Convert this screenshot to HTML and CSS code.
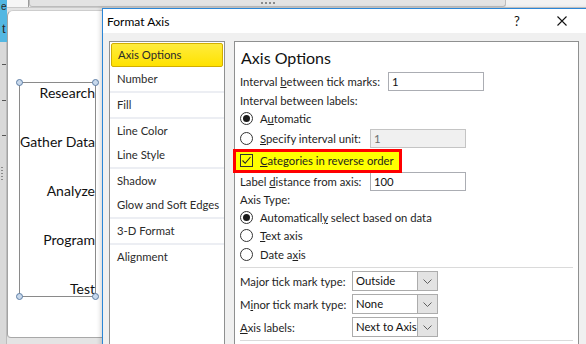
FILE: index.html
```html
<!DOCTYPE html>
<html>
<head>
<meta charset="utf-8">
<link rel="stylesheet" href="styles.css">
</head>
<body>
<div class="app">
  <div class="ruler">
    <div class="ruler-blue"><span class="rg1">e</span><span class="rg2">t</span></div>
    <div class="ruler-grey">
      <div class="tick t1"></div>
      <div class="tick t2"></div>
      <div class="tick t3"></div>
      <div class="grip-v"></div>
    </div>
  </div>
  <div class="main">
    <div class="topstrip">
      <div class="strip-left"></div>
      <div class="strip-thumb"><span class="grip-h"></span></div>
      <div class="strip-rest"></div>
    </div>
    <div class="chart">
      <div class="axisbox">
        <div class="lab">Research</div>
        <div class="lab">Gather Data</div>
        <div class="lab">Analyze</div>
        <div class="lab">Program</div>
        <div class="lab">Test</div>
        <span class="hd tl"></span><span class="hd tr"></span><span class="hd bl"></span><span class="hd br"></span>
      </div>
    </div>
  </div>
</div>

<div class="dialog">
  <div class="titlebar">
    <span class="title">Format Axis</span>
    <span class="help">?</span>
    <svg class="close" width="10" height="10" viewBox="0 0 10 10"><path d="M0.5 0.5 L9.5 9.5 M9.5 0.5 L0.5 9.5" stroke="#111" stroke-width="1.1" fill="none"/></svg>
  </div>
  <div class="dbody">
    <div class="nav">
      <div class="item sel">Axis Options</div>
      <div class="item">Number</div>
      <div class="sep"></div>
      <div class="item">Fill</div>
      <div class="sep"></div>
      <div class="item">Line Color</div>
      <div class="item">Line Style</div>
      <div class="sep"></div>
      <div class="item">Shadow</div>
      <div class="item">Glow and Soft Edges</div>
      <div class="sep"></div>
      <div class="item">3-D Format</div>
      <div class="sep"></div>
      <div class="item">Alignment</div>
    </div>
    <div class="panel">
      <div class="heading">Axis Options</div>
      <div class="row h22">
        <span class="lbl w148"><span>Interval <u>b</u>etween tick marks:</span></span>
        <span class="inp">1</span>
      </div>
      <div class="row h17"><span>Interval between labels:</span></div>
      <div class="row h18"><span class="radio on"></span><span>A<u>u</u>tomatic</span></div>
      <div class="row h22">
        <span class="lbl w130"><span class="radio"></span><span><u>S</u>pecify interval unit:</span></span>
        <span class="inp dis">1</span>
      </div>
      <div class="row h22 hlrow">
        <span class="hl"></span>
        <span class="check"><svg width="11" height="11" viewBox="0 0 11 11"><path d="M1.5 5.5 L4.2 8.3 L9.5 2" stroke="#222" stroke-width="1.1" fill="none"/></svg></span>
        <span class="fg"><u>C</u>ategories in reverse order</span>
      </div>
      <div class="row h20">
        <span class="lbl w130"><span>Label <u>d</u>istance from axis:</span></span>
        <span class="inp">100</span>
      </div>
      <div class="row h17"><span>Axis Type:</span></div>
      <div class="row h18"><span class="radio on"></span><span>Automaticall<u>y</u> select based on data</span></div>
      <div class="row h19"><span class="radio"></span><span><u>T</u>ext axis</span></div>
      <div class="row h19"><span class="radio"></span><span>Date a<u>x</u>is</span></div>
      <div class="hr hr1"></div>
      <div class="row h22">
        <span class="lbl w112"><span>Ma<u>j</u>or tick mark type:</span></span>
        <span class="dd"><span class="ddv">Outside</span><span class="ddb"><svg width="9" height="5" viewBox="0 0 9 5"><path d="M0.5 0.5 L4.5 4.5 L8.5 0.5" stroke="#606060" fill="none"/></svg></span></span>
      </div>
      <div class="row h24">
        <span class="lbl w112"><span>M<u>i</u>nor tick mark type:</span></span>
        <span class="dd"><span class="ddv">None</span><span class="ddb"><svg width="9" height="5" viewBox="0 0 9 5"><path d="M0.5 0.5 L4.5 4.5 L8.5 0.5" stroke="#606060" fill="none"/></svg></span></span>
      </div>
      <div class="row h22">
        <span class="lbl w112"><span><u>A</u>xis labels:</span></span>
        <span class="dd"><span class="ddv">Next to Axis</span><span class="ddb"><svg width="9" height="5" viewBox="0 0 9 5"><path d="M0.5 0.5 L4.5 4.5 L8.5 0.5" stroke="#606060" fill="none"/></svg></span></span>
      </div>
      <div class="hr hr2"></div>
    </div>
  </div>
</div>
</body>
</html>
```
FILE: styles.css
```css
* { box-sizing: border-box; }
html, body { margin: 0; padding: 0; }
body {
  width: 586px;
  height: 344px;
  overflow: hidden;
  position: relative;
  background: #e4e4e4;
  font-family: Lato, "Noto Sans", sans-serif;
  color: #1e1e1e;
}

/* background application */
.app { display: flex; height: 344px; }
.ruler { width: 7px; display: flex; flex-direction: column; overflow: hidden; }
.ruler-blue {
  height: 42px; background: #53b7e2; position: relative; overflow: hidden;
  font-family: "Liberation Sans", sans-serif; font-size: 10px; line-height: 12px; color: #2a2a2a;
}
.rg1 { position: absolute; left: 1px; top: 1px; }
.rg2 { position: absolute; left: 2px; top: 22px; font-size: 13px; line-height: 14px; }
.ruler-grey { flex: 1; background: #d9d9d9; position: relative; border-right: 1px solid #bdbdbd; }
.tick { position: absolute; right: 0; width: 4px; height: 1px; background: #555; }
.t1 { top: 22px; }
.t2 { top: 58px; }
.t3 { top: 93px; }
.grip-v {
  position: absolute; left: 1px; top: 125px; width: 2px; height: 14px;
  background: repeating-linear-gradient(#8a8a8a 0 1px, transparent 1px 3px);
}
.main { flex: 1; display: flex; flex-direction: column; }
.topstrip { height: 8px; display: flex; background: #f2f2f2; border-bottom: 1px solid #c9c9c9; }
.strip-left { width: 22px; background: #f6f6f6; border-right: 1px solid #9c9c9c; }
.strip-thumb {
  width: 477px; background: #e3e3e3; border: 1px solid #bcbcbc; border-top: 0;
  border-radius: 0 0 3px 3px; display: flex; justify-content: center; padding-top: 2px;
}
.grip-h {
  width: 14px; height: 2px;
  background: repeating-linear-gradient(90deg, #8a8a8a 0 2px, transparent 2px 4px);
}
.strip-rest { flex: 1; }
.chart {
  margin-top: 2px; height: 328px; background: #fff;
  border-left: 1px solid #a3a3a3; border-top: 1px solid #cdcdcd; border-bottom: 1px solid #a8a8a8;
  border-top-left-radius: 6px; border-bottom-left-radius: 4px;
  padding: 71px 0 0 11px;
}
.axisbox {
  position: relative; width: 77px; height: 215px; border: 1px solid #8a8a8a;
  display: flex; flex-direction: column; align-items: flex-end; gap: 29px;
}
.lab { font-size: 14px; line-height: 20px; white-space: nowrap; color: #111; }
.hd {
  position: absolute; width: 7px; height: 7px; border-radius: 50%;
  background: #c9d9ec; border: 1px solid #5f7fa6;
}
.tl { top: -4px; left: -4px; }
.tr { top: -4px; right: -4px; }
.bl { bottom: -4px; left: -4px; }
.br { bottom: -4px; right: -4px; }

/* dialog */
.dialog {
  position: absolute; left: 102px; top: 8px; width: 490px; height: 345px;
  border: 1px solid #2b86d6; background: #f0f0f0;
  box-shadow: -2px 0 4px rgba(0,0,0,0.14);
  display: flex; flex-direction: column;
  font-size: 11.3px;
}
.titlebar { height: 24px; flex: none; background: #fff; display: flex; align-items: center; padding-left: 4px; }
.title { flex: 1; font-size: 12px; color: #000; }
.help { width: 14px; text-align: center; font-size: 13px; color: #111; margin-right: 33px; }
.close { margin-right: 24px; }
.dbody { flex: 1; display: flex; gap: 9px; padding: 8px 0 0 6px; }
.nav { width: 116px; height: 320px; background: #fff; border: 1px solid #8f9090; padding-top: 1px; }
.item { height: 24px; line-height: 24px; padding-left: 7px; color: #2b2b2b; white-space: nowrap; }
.item.sel {
  margin: 0 1px; border: 1px solid #d2ae00; border-radius: 2px; line-height: 22px; padding-left: 6px;
  background: linear-gradient(#ffec3d, #ffe200);
}
.sep { height: 2px; background: #eceef3; }

.panel {
  width: 345px; height: 320px; background: #fff; border: 1px solid #8f9090;
  padding: 0 4px 0 5px;
}
.heading { height: 28px; padding-top: 3px; line-height: 25px; font-size: 16px; padding-left: 1px; color: #111; }
.row { display: flex; align-items: center; white-space: nowrap; }
.h17 { height: 17px; }
.h18 { height: 18px; }
.h19 { height: 19px; }
.h20 { height: 20px; }
.h22 { height: 22px; }
.h24 { height: 24px; }
.lbl { display: flex; align-items: center; flex: none; }
.w148 { width: 148px; }
.w130 { width: 130px; }
.w112 { width: 112px; }
.inp {
  width: 96px; height: 19px; border: 1px solid #abadb3; background: #fff;
  padding-left: 3px; line-height: 17px; color: #111;
}
.inp.dis { background: #f0f0f0; border-color: #c4c4c4; color: #6d6d6d; }
.radio {
  width: 13px; height: 13px; border: 1px solid #333; border-radius: 50%; margin-right: 7px;
  display: flex; align-items: center; justify-content: center; background: #fff; flex: none;
}
.radio.on::after { content: ""; width: 7px; height: 7px; border-radius: 50%; background: #1a1a1a; }
.hlrow { position: relative; }
.hl {
  position: absolute; left: -7px; top: 0; width: 169px; height: 24px;
  border: 3px solid #ff0000; background: #ffff00;
}
.check {
  position: relative; width: 13px; height: 13px; border: 1px solid #333; margin-right: 7px;
  display: flex; align-items: center; justify-content: center; flex: none;
}
.fg { position: relative; }
.hr { height: 1px; background: #dadada; width: 333px; }
.hr1 { margin: 3px 0 2px; }
.hr2 { margin-top: 2px; }
.dd { width: 86px; height: 20px; border: 1px solid #acacac; display: flex; background: #fff; }
.ddv { flex: 1; padding-left: 3px; line-height: 18px; color: #111; white-space: nowrap; overflow: hidden; }
.ddb {
  width: 20px; flex: none; background: #e3e3e3; border-left: 1px solid #acacac;
  display: flex; align-items: center; justify-content: center;
}
```
